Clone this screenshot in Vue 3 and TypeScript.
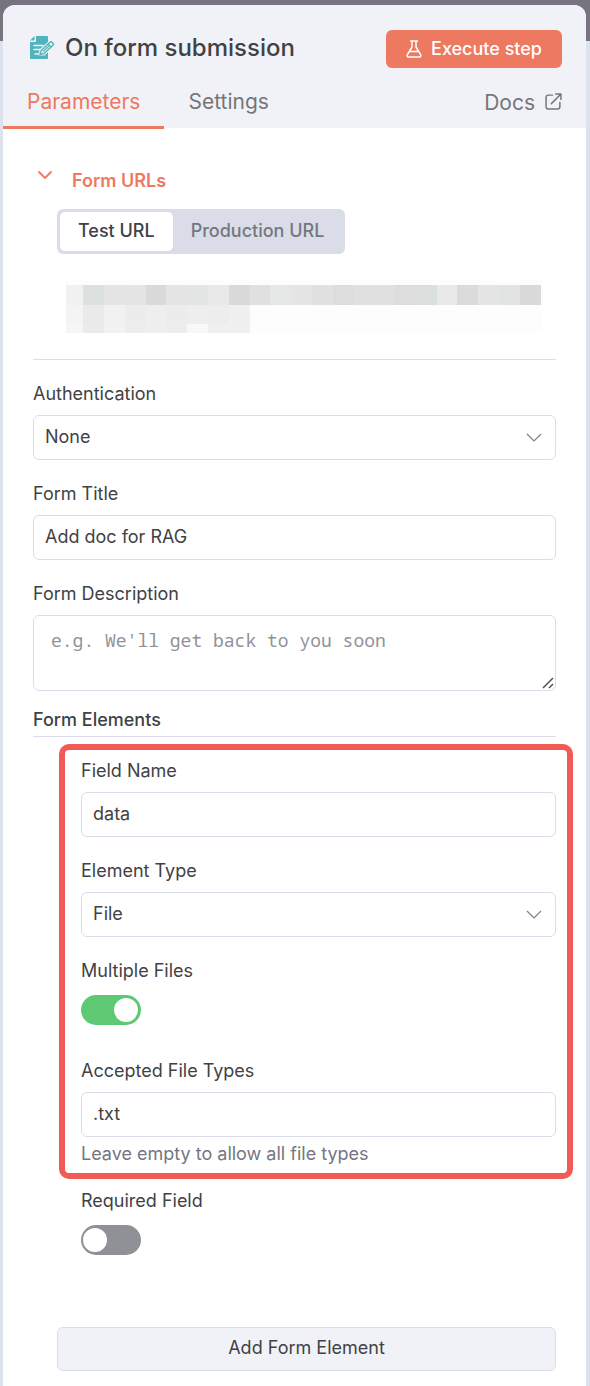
<script setup lang="ts">
import { ref } from 'vue'

const activeTab = ref<'parameters' | 'settings'>('parameters')
const urlMode = ref<'test' | 'production'>('test')
const authentication = ref('None')
const formTitle = ref('Add doc for RAG')
const formDescription = ref('')
const fieldName = ref('data')
const elementType = ref('File')
const multipleFiles = ref(true)
const acceptedTypes = ref('.txt')
const requiredField = ref(false)

interface Cell {
  x: number
  y: number
  w: number
  h: number
  fill: string
}

const edges = [
  0, 17, 38, 59, 80, 100, 121, 142, 163, 184, 204, 225, 246, 267, 288, 309, 329, 350, 371, 391,
  412, 433, 454, 475,
]

const rows: { y: number; h: number; fills: string[] }[] = [
  {
    y: 6,
    h: 20,
    fills: [
      '#f1f1f1', '#dce0df', '#e5e5e5', '#e4e4e4', '#dadada', '#e5e5e5', '#e2e5e4', '#e9e9e9',
      '#dadada', '#e0e0e0', '#e5e8e7', '#e5e5e5', '#e1e1e1', '#dddddd', '#e0e0e0', '#e0e0e0',
      '#dddddd', '#dbdfde', '#e9e9e9', '#dbdbdb', '#e5e5e5', '#e1e4e3', '#dadada',
    ],
  },
  {
    y: 26,
    h: 19,
    fills: [
      '#f4f4f4', '#eaeaea', '#f1f1f1', '#ececec', '#eeeeee', '#ececec', '#eeeeee', '#ededed',
      '#f0f0f0',
    ],
  },
  {
    y: 45,
    h: 9,
    fills: [
      '#f6f6f6', '#ebebeb', '#f2f2f2', '#ededed', '#efefef', '#ededed', '#f8f8f8', '#f0f0f0',
      '#f0f0f0',
    ],
  },
]

const cells: Cell[] = rows.flatMap((row) =>
  row.fills.map((fill, i) => ({
    x: edges[i],
    y: row.y,
    w: edges[i + 1] - edges[i],
    h: row.h,
    fill,
  })),
)
</script>

<template>
  <div class="page">
    <main class="panel">
      <header class="header">
        <div class="title-row">
          <svg class="form-icon" viewBox="0 0 26 26" aria-hidden="true">
            <path fill="#50b4bd" d="M7 1h11a1 1 0 0 1 1 1v21a1 1 0 0 1-1 1H2a1 1 0 0 1-1-1V7h5a1 1 0 0 0 1-1z" />
            <path fill="#50b4bd" d="M1 5.500 5.500 1v3.500a1 1 0 0 1-1 1z" />
            <path stroke="#f1f2f8" stroke-width="1.500" stroke-linecap="round" d="M5 10.500h9M5 14.500h6M6 19h4" />
            <path fill="#50b4bd" stroke="#f1f2f8" stroke-width="3" stroke-linejoin="round" d="m11 19 1-4 9-8 3.500 3.500-9.500 8.500z" />
            <path fill="#f1f2f8" stroke="#50b4bd" stroke-width="1.400" stroke-linejoin="round" d="m11 19.500 1.200-4L21 7.200a1.500 1.500 0 0 1 2 0l1 1a1.500 1.500 0 0 1 0 2l-9 8.300z" />
            <path stroke="#50b4bd" stroke-width="1.200" d="m19 9 3.200 3.200M14 16.500l6-5.500" />
          </svg>
          <h1 class="title">On form submission</h1>
          <button type="button" class="execute">
            <svg class="flask" viewBox="0 0 16 18" fill="none" stroke="currentColor" stroke-width="1.500" stroke-linecap="round" stroke-linejoin="round" aria-hidden="true">
              <path d="M4.500 1h7M6 1v6L1.500 14.500A1.500 1.500 0 0 0 2.800 17h10.400a1.500 1.500 0 0 0 1.300-2.500L10 7V1M4 11.500h8" />
            </svg>
            Execute step
          </button>
        </div>
        <nav class="tabs">
          <button type="button" class="tab" :class="{ active: activeTab === 'parameters' }" @click="activeTab = 'parameters'">Parameters</button>
          <button type="button" class="tab" :class="{ active: activeTab === 'settings' }" @click="activeTab = 'settings'">Settings</button>
          <a class="docs" href="#docs">
            Docs
            <svg class="external" viewBox="0 0 16 16" fill="none" stroke="currentColor" stroke-width="1.400" stroke-linecap="round" stroke-linejoin="round" aria-hidden="true">
              <path d="M7 2H3a2 2 0 0 0-2 2v9a2 2 0 0 0 2 2h9a2 2 0 0 0 2-2V9M10 1h5v5M15 1 6 10" />
            </svg>
          </a>
        </nav>
      </header>

      <div class="body">
        <section class="urls">
          <button type="button" class="urls-toggle">
            <svg class="caret" viewBox="0 0 16 16" fill="none" stroke="currentColor" stroke-width="1.800" stroke-linecap="round" stroke-linejoin="round" aria-hidden="true">
              <path d="m2 4 6 6 6-6" />
            </svg>
            Form URLs
          </button>
          <div class="segmented">
            <button type="button" class="segment" :class="{ chosen: urlMode === 'test' }" @click="urlMode = 'test'">Test URL</button>
            <button type="button" class="segment" :class="{ chosen: urlMode === 'production' }" @click="urlMode = 'production'">Production URL</button>
          </div>
          <svg class="redacted" viewBox="0 0 476 54" shape-rendering="crispEdges" aria-hidden="true">
            <rect width="476" height="54" fill="#fdfdfd" />
            <rect v-for="(c, i) in cells" :key="i" :x="c.x" :y="c.y" :width="c.w" :height="c.h" :fill="c.fill" />
          </svg>
        </section>

        <div class="fields">
          <div class="field">
            <label for="auth">Authentication</label>
            <div class="stack">
              <select id="auth" v-model="authentication" class="control">
                <option>None</option>
                <option>Basic Auth</option>
              </select>
              <svg class="chevron" viewBox="0 0 16 10" aria-hidden="true"><path d="m1 1 7 7 7-7" /></svg>
            </div>
          </div>
          <div class="field">
            <label for="title">Form Title</label>
            <input id="title" v-model="formTitle" type="text" class="control" />
          </div>
          <div class="field">
            <label for="description">Form Description</label>
            <div class="stack">
              <textarea id="description" v-model="formDescription" class="control area" placeholder="e.g. We'll get back to you soon"></textarea>
              <svg class="grip" viewBox="0 0 12 12" aria-hidden="true"><path d="M1 11 11 1M7 11l4-4" /></svg>
            </div>
          </div>
        </div>

        <h2 class="group-title">Form Elements</h2>

        <section class="highlight fields">
          <div class="field">
            <label for="field-name">Field Name</label>
            <input id="field-name" v-model="fieldName" type="text" class="control" />
          </div>
          <div class="field">
            <label for="element-type">Element Type</label>
            <div class="stack">
              <select id="element-type" v-model="elementType" class="control">
                <option>File</option>
                <option>Text</option>
              </select>
              <svg class="chevron" viewBox="0 0 16 10" aria-hidden="true"><path d="m1 1 7 7 7-7" /></svg>
            </div>
          </div>
          <div class="field">
            <label for="multiple">Multiple Files</label>
            <div class="switch-row">
              <input id="multiple" v-model="multipleFiles" type="checkbox" role="switch" class="switch" />
            </div>
          </div>
          <div class="field">
            <label for="accepted">Accepted File Types</label>
            <input id="accepted" v-model="acceptedTypes" type="text" class="control" aria-describedby="accepted-hint" />
            <p id="accepted-hint" class="hint">Leave empty to allow all file types</p>
          </div>
        </section>

        <div class="field required">
          <label for="required">Required Field</label>
          <div class="switch-row">
            <input id="required" v-model="requiredField" type="checkbox" role="switch" class="switch" />
          </div>
        </div>

        <button type="button" class="add">Add Form Element</button>
      </div>
    </main>
  </div>
</template>

<style>
body {
  margin: 0;
  background: #dde3ed;
}
</style>

<style scoped>
* {
  box-sizing: border-box;
}

.page {
  min-height: 100vh;
  padding: 5px 4px 0 3px;
  background: linear-gradient(#777480 41px, #dde3ed 41px);
  font-family: Inter, "Liberation Sans", sans-serif;
  font-size: 18px;
  line-height: 26px;
  color: #414244;
}

button,
input,
select {
  font: inherit;
  color: inherit;
}

button {
  padding: 0;
  border: 0;
  background: none;
  cursor: pointer;
}

.panel {
  min-height: calc(100vh - 5px);
  overflow: hidden;
  border-radius: 12px 12px 0 0;
  background: #fff;
}

.header {
  height: 123px;
  padding-top: 25px;
  background: #f1f2f8;
}

.title-row {
  display: flex;
  align-items: center;
  height: 38px;
  padding: 0 24px 0 26px;
}

.form-icon {
  width: 26px;
  height: 26px;
  margin-bottom: 3px;
  fill: none;
}

.title {
  flex: 1;
  margin: 0 0 3px 10px;
  font-size: 24px;
  font-weight: 500;
  line-height: 30px;
}

.execute {
  display: flex;
  align-items: center;
  justify-content: center;
  gap: 9px;
  height: 38px;
  padding: 0 20px 1px;
  border-radius: 6px;
  background: #ee7961;
  color: #fff;
  font-weight: 500;
}

.flask {
  width: 16px;
  height: 18px;
}

.tabs {
  display: flex;
  align-items: flex-start;
  padding-top: 12px;
  padding-right: 24px;
  font-size: 21px;
  line-height: 28px;
  color: #747679;
}

.tab {
  height: 49px;
  padding: 0 24px 2px;
  border-bottom: 3px solid transparent;
}

.tab.active {
  border-color: #ee7961;
  color: #ee7961;
}

.docs {
  display: flex;
  align-items: center;
  gap: 10px;
  height: 45px;
  margin-left: auto;
  color: inherit;
  text-decoration: none;
}

.external {
  width: 17px;
  height: 17px;
  margin-bottom: 3px;
}

.body {
  padding: 40px 30px 15px;
}

.urls {
  padding-bottom: 26px;
  border-bottom: 1px solid #dbdde7;
}

.urls-toggle {
  display: flex;
  gap: 19px;
  padding-left: 4px;
  color: #ee7961;
  font-weight: 600;
}

.caret {
  width: 16px;
  height: 16px;
}

.segmented {
  display: flex;
  width: fit-content;
  margin: 15px 0 25px 24px;
  padding: 3px;
  border-radius: 6px;
  background: #dadde7;
}

.segment {
  height: 39px;
  padding: 0 18px 2px;
  border-radius: 5px;
  color: #747681;
  font-weight: 500;
}

.segment.chosen {
  background: #fff;
  color: #414244;
}

.redacted {
  display: block;
  width: calc(100% - 47px);
  margin-left: 33px;
}

.fields {
  display: flex;
  flex-direction: column;
  gap: 21px;
}

.body > .fields:not(.highlight) {
  margin-top: 21px;
}

.field label {
  display: block;
  width: fit-content;
  margin-bottom: 8px;
}

.control {
  display: block;
  width: 100%;
  height: 45px;
  padding: 0 11px 2px;
  border: 1px solid #dadde9;
  border-radius: 6px;
  background: #fff;
  outline: none;
}

.area {
  height: 76px;
  padding: 11px 17px;
  font-family: "Noto Sans Mono", "DejaVu Sans Mono", monospace;
  font-size: 18px;
  line-height: 26px;
  color: inherit;
  resize: vertical;
}

.area::placeholder {
  color: #919298;
}

.area::-webkit-resizer {
  background: transparent;
}

.stack {
  display: grid;
  align-items: center;
}

.stack > * {
  grid-area: 1 / 1;
}

.stack select {
  appearance: none;
}

.chevron {
  justify-self: end;
  width: 16px;
  height: 10px;
  margin-right: 14px;
  fill: none;
  stroke: #808186;
  stroke-width: 1.2;
  pointer-events: none;
}

.grip {
  place-self: end;
  width: 12px;
  height: 12px;
  margin: 0 2px 2px 0;
  fill: none;
  stroke: #505154;
  stroke-width: 1.5;
  pointer-events: none;
}

.group-title {
  margin: 16px 0 7px;
  padding-bottom: 3px;
  border-bottom: 1px solid #dadde9;
  font-size: 18px;
  font-weight: 500;
  line-height: 26px;
}

.highlight {
  margin: 0 -17px 0 26px;
  padding: 8px 11px 6px 16px;
  border: 6px solid #f15b55;
  border-radius: 10px;
}

.switch-row {
  height: 45px;
  padding-top: 3px;
}

.switch {
  display: flex;
  align-items: center;
  appearance: none;
  width: 60px;
  height: 30px;
  margin: 0;
  padding: 0 3px 0 2px;
  border-radius: 15px;
  background: #909196;
  cursor: pointer;
}

.switch::before {
  content: "";
  width: 24px;
  height: 24px;
  border-radius: 50%;
  background: #fff;
}

.switch:checked {
  justify-content: flex-end;
  background: #5dca73;
}

.hint {
  margin: 4px 0 0;
  color: #747681;
}

.required {
  margin: 9px 0 60px 48px;
}

.add {
  display: block;
  width: calc(100% - 24px);
  height: 44px;
  margin-left: 24px;
  padding-bottom: 2px;
  border: 1px solid #dadde9;
  border-radius: 6px;
  background: #f1f2f8;
}
</style>
